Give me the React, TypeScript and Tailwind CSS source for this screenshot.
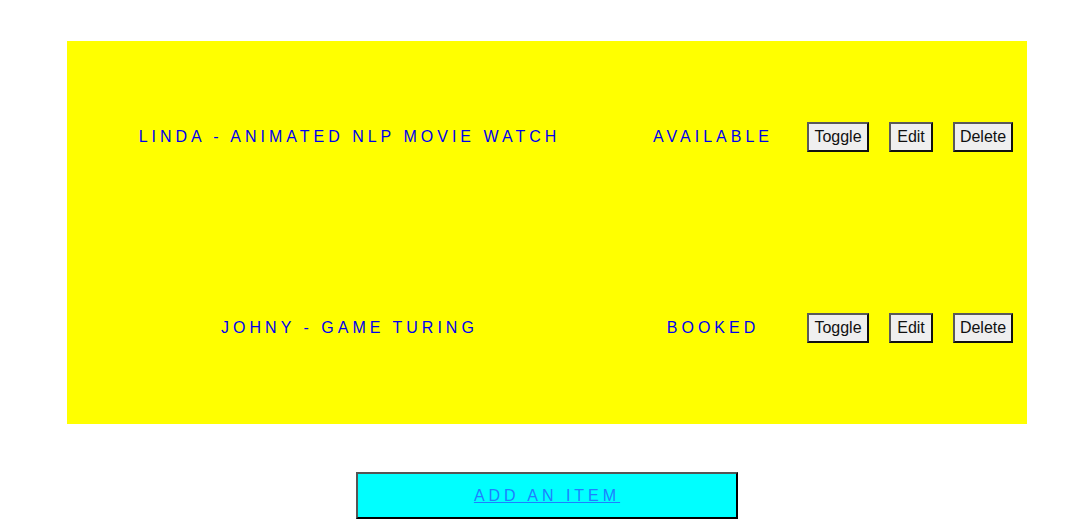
import React from "react";

const items = [
  { name: "Linda - Animated NLP Movie Watch", status: "Available" },
  { name: "Johny - Game Turing", status: "Booked" },
];

function Btn({ label, w }: { label: string; w: string }) {
  return (
    <button
      className={`${w} h-[30px] flex items-center justify-center bg-[#efefef] text-[#111111] text-[16px] leading-none border-2 border-solid border-t-[#5a5a5a] border-l-[#5a5a5a] border-b-[#111111] border-r-[#111111]`}
    >
      {label}
    </button>
  );
}

export default function App() {
  return (
    <div
      className="w-[1082px] h-[531px] bg-white pt-[41px]"
      style={{ fontFamily: '"Liberation Sans", Arial, sans-serif' }}
    >
      <div className="ml-[67px] w-[960px] h-[383px] bg-[#ffff00] flex flex-col">
        {items.map((it, i) => (
          <div key={i} className="flex-1 flex items-center">
            <div className="w-[565px] text-center text-[16px] uppercase tracking-[4px] text-[#0000ee]">
              {it.name}
            </div>
            <div className="w-[162px] text-center text-[16px] uppercase tracking-[4px] text-[#0000ee]">
              {it.status}
            </div>
            <div className="ml-[13px] flex items-center gap-[20px]">
              <Btn label="Toggle" w="w-[62px]" />
              <Btn label="Edit" w="w-[44px]" />
              <Btn label="Delete" w="w-[60px]" />
            </div>
          </div>
        ))}
      </div>
      <div className="mt-[48px] ml-[356px] w-[382px] h-[47px] bg-[#00ffff] flex items-center justify-center border-2 border-solid border-t-[#555555] border-l-[#555555] border-b-[#000000] border-r-[#000000]">
        <a className="text-[16px] uppercase tracking-[4px] text-[#1e7fff] underline">
          Add an item
        </a>
      </div>
    </div>
  );
}
